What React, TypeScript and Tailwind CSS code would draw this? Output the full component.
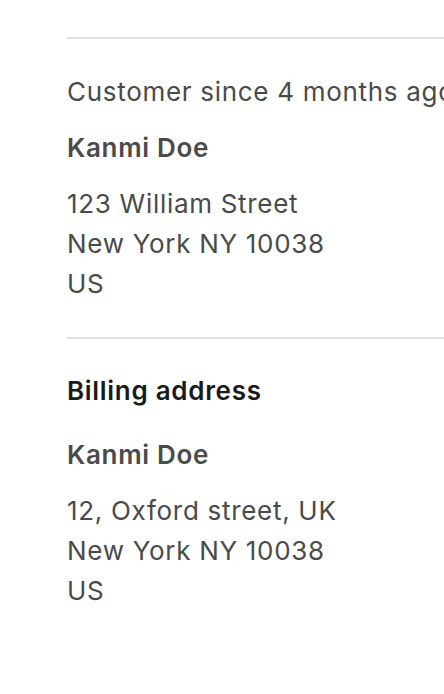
export default function App() {
  return (
    <div className="w-[444px] h-[694px] overflow-hidden bg-white" style={{ fontFamily: 'Inter, "Noto Sans", sans-serif' }}>
      <div className="w-[600px] pl-[67px] pt-[37px] tracking-[0.7px]">
        <div className="border-t-2 border-[#e3e3e3]" />
        <div className="pt-[33px] pb-[33px] text-[26px] leading-[40px] text-[#4a4a4a]">
          <p>Customer since 4 months ago</p>
          <p className="mt-4 font-semibold">Kanmi Doe</p>
          <div className="mt-4">
            <p>123 William Street</p>
            <p>New York NY 10038</p>
            <p>US</p>
          </div>
        </div>
        <div className="border-t-2 border-[#e3e3e3]" />
        <div className="pt-[32px] text-[26px] leading-[40px] text-[#4a4a4a]">
          <p className="font-semibold text-[#1a1a1a]">Billing address</p>
          <p className="mt-6 font-semibold">Kanmi Doe</p>
          <div className="mt-4">
            <p>12, Oxford street, UK</p>
            <p>New York NY 10038</p>
            <p>US</p>
          </div>
        </div>
      </div>
    </div>
  );
}
